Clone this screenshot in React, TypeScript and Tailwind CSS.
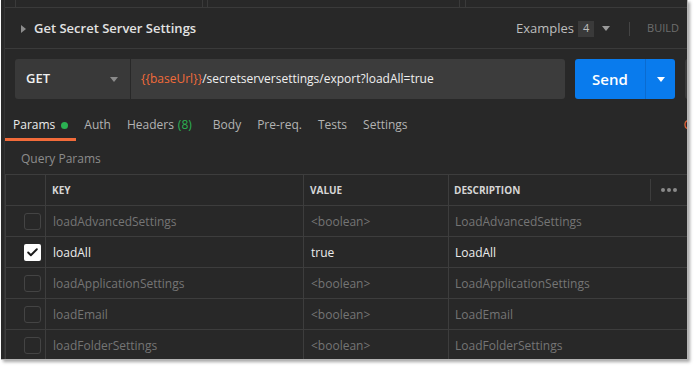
import { Check } from "lucide-react";

const rows = [
  { key: "loadAdvancedSettings", value: "<boolean>", desc: "LoadAdvancedSettings", on: false },
  { key: "loadAll", value: "true", desc: "LoadAll", on: true },
  { key: "loadApplicationSettings", value: "<boolean>", desc: "LoadApplicationSettings", on: false },
  { key: "loadEmail", value: "<boolean>", desc: "LoadEmail", on: false },
  { key: "loadFolderSettings", value: "<boolean>", desc: "LoadFolderSettings", on: false },
];

function Caret({ className }: { className: string }) {
  return (
    <svg width="8" height="5" viewBox="0 0 8 5" className={className}>
      <path d="M0 0h8L4 5z" fill="currentColor" />
    </svg>
  );
}

function App() {
  return (
    <div className="w-[697px] h-[369px] bg-white overflow-hidden font-['Open_Sans',sans-serif]">
      <div className="ml-[1px] w-[687px] h-[360px] bg-[#282828] border-r border-b border-[#b5b5b5] shadow-[2px_2px_3px_rgba(0,0,0,0.35)] overflow-hidden">
        <div className="ml-[3px] h-full border-l border-[#333333]">
          {/* cropped tab strip */}
          <div className="flex h-[8px] border-b border-[#3a3a3a]">
            <div className="w-[11px] border-r border-[#3a3a3a]" />
            <div className="w-[187px] border-r border-[#3a3a3a]" />
            <div className="w-[5px] border-r border-[#3a3a3a]" />
            <div className="w-[252px] border-r border-[#3a3a3a]" />
            <div className="w-[6px] border-r border-[#3a3a3a]" />
          </div>

          {/* title row */}
          <div className="flex items-center h-[41px] pt-[1px] border-b border-[#3a3a3a] pl-[16px]">
            <svg width="5" height="8" viewBox="0 0 5 8" className="text-[#8c8c8c]">
              <path d="M0 0l5 4-5 4z" fill="currentColor" />
            </svg>
            <span className="ml-[8px] text-[13px] font-semibold text-[#e2e2e2]">Get Secret Server Settings</span>
            <div className="ml-auto flex items-center">
              <span className="text-[13px] text-[#bdbdbd]">Examples</span>
              <span className="ml-[4px] w-[16px] h-[16px] bg-[#3a3a3a] text-[11px] text-[#bdbdbd] flex items-center justify-center">4</span>
              <Caret className="ml-[8px] text-[#9a9a9a]" />
              <div className="ml-[19px] w-px h-[14px] bg-[#444444]" />
              <span className="ml-[17px] mr-[8px] text-[11px] text-[#6e6e6e]">BUILD</span>
            </div>
          </div>

          {/* url row */}
          <div className="flex h-[40px] mt-[10px] pl-[10px] overflow-hidden">
            <div className="shrink-0 w-[115px] bg-[#393939] rounded-l-[3px] flex items-center pl-[11px] pr-[12px]">
              <span className="text-[13px] font-semibold text-[#f0f0f0]">GET</span>
              <Caret className="ml-auto text-[#8a8a8a]" />
            </div>
            <div className="shrink-0 ml-px w-[434px] bg-[#3c3c3c] rounded-r-[3px] flex items-center pl-[10px] text-[12px] text-[#f0f0f0]">
              <span className="text-[#f26b3a]">{"{{baseUrl}}"}</span>
              <span>/secretserversettings/export?loadAll=true</span>
            </div>
            <div className="shrink-0 ml-[10px] w-[100px] flex rounded-[3px] bg-[#097bed] overflow-hidden">
              <div className="w-[70px] flex items-center justify-center text-[15px] font-semibold text-white">Send</div>
              <div className="w-[30px] border-l border-[#0a6bd0] flex items-center justify-center">
                <Caret className="text-white" />
              </div>
            </div>
            <div className="shrink-0 ml-[10px] w-[20px] bg-[#3a3a3a] rounded-l-[3px]" />
          </div>

          {/* tabs */}
          <div className="flex items-stretch h-[29px] mt-[13px] text-[12px] text-[#b3b3b3]">
            <div className="flex items-center px-[8px] border-b-[3px] border-[#f26b3a] text-[#ececec]">
              Params
              <span className="ml-[6px] w-[7px] h-[7px] rounded-full bg-[#2bb152]" />
            </div>
            <div className="flex items-center px-[8px] pb-[3px]">Auth</div>
            <div className="flex items-center px-[8px] pb-[3px]">
              Headers <span className="ml-[4px] text-[#2bb152]">(8)</span>
            </div>
            <div className="flex items-center ml-[5px] px-[8px] pb-[3px]">Body</div>
            <div className="flex items-center px-[8px] pb-[3px]">Pre-req.</div>
            <div className="flex items-center px-[8px] pb-[3px]">Tests</div>
            <div className="flex items-center px-[8px] pb-[3px]">Settings</div>
            <div className="ml-auto flex items-center pb-[3px] text-[#f26b3a] translate-x-[4px]">C</div>
          </div>

          {/* query params */}
          <div className="h-[33px] pt-[3px] pl-[16px] flex items-center text-[12px] text-[#8c8c8c]">Query Params</div>

          {/* table */}
          <div className="border-t border-l border-[#3d3d3d] text-[12px]">
            <div className="grid grid-cols-[40px_258px_145px_1fr] h-[31px]">
              <div className="border-r border-b border-[#3d3d3d]" />
              <div className="border-r border-b border-[#3d3d3d] flex items-center pt-[1px] pl-[6px] text-[10px] font-bold text-[#d6d6d6]">KEY</div>
              <div className="border-r border-b border-[#3d3d3d] flex items-center pt-[1px] pl-[6px] text-[10px] font-bold text-[#d6d6d6]">VALUE</div>
              <div className="border-b border-[#3d3d3d] flex items-center pl-[5px] text-[10px] font-bold text-[#d6d6d6]">
                <span className="pt-[1px]">DESCRIPTION</span>
                <div className="ml-auto flex items-center h-[22px] border-l border-[#3d3d3d] pl-[10px] pr-[10px] gap-[2px]">
                  <span className="w-[4px] h-[4px] rounded-full bg-[#8a8a8a]" />
                  <span className="w-[4px] h-[4px] rounded-full bg-[#8a8a8a]" />
                  <span className="w-[4px] h-[4px] rounded-full bg-[#8a8a8a]" />
                </div>
              </div>
            </div>
            {rows.map((r) => (
              <div key={r.key} className={`grid grid-cols-[40px_258px_145px_1fr] h-[31px] ${r.on ? "text-[#ececec]" : "text-[#757575]"}`}>
                <div className="border-r border-b border-[#3d3d3d] flex items-center pl-[18px]">
                  {r.on ? (
                    <div className="w-[17px] h-[17px] rounded-[2px] bg-white flex items-center justify-center">
                      <Check size={13} strokeWidth={3.5} className="text-[#1a1a1a]" />
                    </div>
                  ) : (
                    <div className="w-[17px] h-[17px] rounded-[3px] border border-[#444444]" />
                  )}
                </div>
                <div className="border-r border-b border-[#3d3d3d] flex items-center pt-[1px] pl-[7px]">{r.key}</div>
                <div className="border-r border-b border-[#3d3d3d] flex items-center pt-[1px] pl-[7px]">{r.value}</div>
                <div className="border-b border-[#3d3d3d] flex items-center pt-[1px] pl-[6px]">{r.desc}</div>
              </div>
            ))}
          </div>
        </div>
      </div>
    </div>
  );
}

export default App;
